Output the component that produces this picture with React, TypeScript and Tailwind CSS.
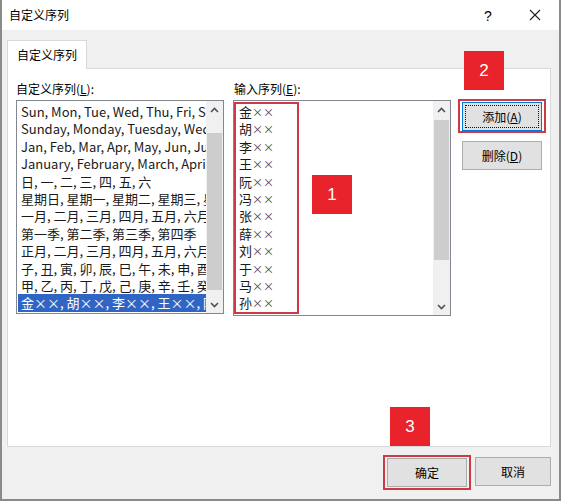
import React from "react";

const leftRows = [
  "Sun, Mon, Tue, Wed, Thu, Fri, Sat",
  "Sunday, Monday, Tuesday, Wednesday, Thursday",
  "Jan, Feb, Mar, Apr, May, Jun, Jul, Aug, Sep",
  "January, February, March, April, May, June",
  "日, 一, 二, 三, 四, 五, 六",
  "星期日, 星期一, 星期二, 星期三, 星期四, 星期五",
  "一月, 二月, 三月, 四月, 五月, 六月, 七月, 八月",
  "第一季, 第二季, 第三季, 第四季",
  "正月, 二月, 三月, 四月, 五月, 六月, 七月, 八月",
  "子, 丑, 寅, 卯, 辰, 巳, 午, 未, 申, 酉, 戌, 亥",
  "甲, 乙, 丙, 丁, 戊, 己, 庚, 辛, 壬, 癸",
  "金××, 胡××, 李××, 王××, 阮××, 冯××, 张××",
];

const names = ["金", "胡", "李", "王", "阮", "冯", "张", "薛", "刘", "于", "马", "孙"];

function Up() {
  return (
    <svg width="9" height="6" viewBox="0 0 9 6">
      <polyline points="1,5 4.5,1.5 8,5" fill="none" stroke="#505050" strokeWidth="1.6" />
    </svg>
  );
}
function Down() {
  return (
    <svg width="9" height="6" viewBox="0 0 9 6">
      <polyline points="1,1 4.5,4.5 8,1" fill="none" stroke="#505050" strokeWidth="1.6" />
    </svg>
  );
}

function Scrollbar({ mt, mb }: { mt: number; mb: number }) {
  return (
    <div className="w-[17px] h-full bg-[#f0f0f0] flex flex-col">
      <div className="h-[17px] flex items-center justify-center shrink-0">
        <Up />
      </div>
      <div className="flex-1 flex flex-col">
        <div className="bg-[#cdcdcd] flex-1 mx-[1px]" style={{ marginTop: mt, marginBottom: mb }} />
      </div>
      <div className="h-[17px] flex items-center justify-center shrink-0">
        <Down />
      </div>
    </div>
  );
}

function Badge({ n, cls }: { n: string; cls: string }) {
  return (
    <div
      className={
        "absolute w-[40px] h-[39px] bg-[#e8232b] text-white flex items-center justify-center text-[17px] font-['Liberation_Sans',sans-serif] z-20 " +
        cls
      }
    >
      {n}
    </div>
  );
}

export default function App() {
  return (
    <div className="w-[561px] h-[501px] flex flex-col bg-[#f0f0f0] border-x-2 border-b-2 border-[#8a8a8a] font-['Noto_Sans_CJK_SC','Noto_Sans',sans-serif] text-black overflow-hidden">
      {/* title bar */}
      <div className="h-[30px] bg-white flex items-center shrink-0 relative">
        <span className="pl-[7px] text-[12px]">自定义序列</span>
        <span className="absolute left-[482px] top-[6px] text-[14px] font-['Liberation_Sans',sans-serif]">?</span>
        <svg className="absolute left-[527px] top-[9px]" width="12" height="12" viewBox="0 0 12 12">
          <line x1="1" y1="1" x2="11" y2="11" stroke="#222" strokeWidth="1.1" />
          <line x1="11" y1="1" x2="1" y2="11" stroke="#222" strokeWidth="1.1" />
        </svg>
      </div>

      <div className="flex-1 flex flex-col pl-[5px] pt-[10px]">
        {/* tab */}
        <div className="w-[80px] h-[29px] -mb-[1px] bg-white border border-b-0 border-[#d9d9d9] relative z-10 flex items-center justify-center text-[12px]">
          自定义序列
        </div>

        {/* panel */}
        <div className="w-[544px] h-[379px] bg-white border border-[#d9d9d9] relative flex pl-[8px] pt-[12px] shrink-0">
          <Badge n="2" cls="left-[456px] top-[-18px]" />
          <Badge n="1" cls="left-[304px] top-[106px]" />
          <Badge n="3" cls="left-[382px] top-[338px]" />

          {/* left column */}
          <div className="w-[208px] flex flex-col">
            <div className="h-[16px] leading-[16px] text-[12px] mb-[3px] whitespace-nowrap">
              自定义序列(<span className="underline">L</span>):
            </div>
            <div className="h-[214px] border border-[#828790] flex">
              <div className="flex-1 min-w-0 overflow-hidden pt-[2px] pl-[1px]">
                {leftRows.map((r, i) => (
                  <div
                    key={i}
                    className={
                      "h-[17.4px] leading-[17.4px] text-[13px] whitespace-nowrap pl-[3px] " +
                      (i === leftRows.length - 1 ? "bg-[#3165c4] text-white" : "text-[#1a1a1a]")
                    }
                  >
                    {r}
                  </div>
                ))}
              </div>
              <Scrollbar mt={15} mb={6} />
            </div>
          </div>

          {/* right column */}
          <div className="w-[218px] ml-[9px] flex flex-col">
            <div className="h-[16px] leading-[16px] text-[12px] mb-[3px] whitespace-nowrap pl-[1px]">
              输入序列(<span className="underline">E</span>):
            </div>
            <div className="h-[216px] border border-[#828790] flex relative">
              <div className="absolute left-0 top-[1px] w-[65px] h-[212px] border-2 border-[#cc3a48] z-10" />
              <div className="flex-1 min-w-0 overflow-hidden pt-[2px] pl-[5px]">
                {names.map((n, i) => (
                  <div key={i} className="h-[17.4px] leading-[17.4px] text-[13px] whitespace-nowrap text-[#1a1a1a]">
                    {n}
                    <span className="text-[11px] text-[#444]">××</span>
                  </div>
                ))}
              </div>
              <Scrollbar mt={2} mb={38} />
            </div>
          </div>

          {/* buttons column */}
          <div className="ml-[7px] mt-[18px] flex flex-col">
            <div className="w-[88px] h-[34px] border-2 border-[#cc3a48] p-[2px] pt-[1px]">
              <div className="w-[80px] h-[29px] bg-[#e1e1e1] border border-[#0078d7] p-[2px]">
                <div className="w-full h-full border border-dotted border-[#111] flex items-center justify-center text-[12px]">
                  添加(<span className="underline">A</span>)
                </div>
              </div>
            </div>
            <div className="ml-[4px] mt-[8px] w-[80px] h-[29px] bg-[#e1e1e1] border border-[#adadad] flex items-center justify-center text-[12px]">
              删除(<span className="underline">D</span>)
            </div>
          </div>
        </div>

        {/* footer */}
        <div className="w-[544px] flex justify-end items-start mt-[8px]">
          <div className="w-[88px] h-[35px] border-2 border-[#cc3a48] p-[1px] pl-[2px]">
            <div className="w-[80px] h-[29px] bg-[#e1e1e1] border border-[#adadad] flex items-center justify-center text-[12px]">
              确定
            </div>
          </div>
          <div className="ml-[4px] mt-[2px] w-[76px] h-[29px] bg-[#e1e1e1] border border-[#adadad] flex items-center justify-center text-[12px]">
            取消
          </div>
        </div>
      </div>
    </div>
  );
}
